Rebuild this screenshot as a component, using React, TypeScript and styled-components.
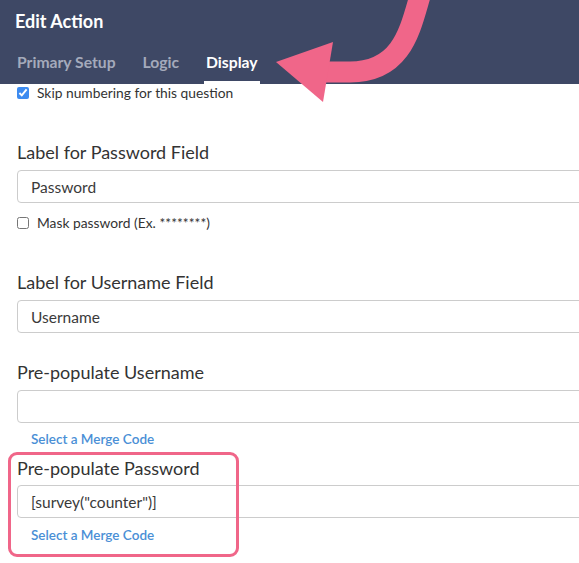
import React from "react";
import styled, { createGlobalStyle } from "styled-components";

const Global = createGlobalStyle`
  html, body { margin: 0; padding: 0; background: #ffffff; }
  body { font-family: Lato, "Open Sans", "Liberation Sans", sans-serif; overflow: hidden; }
  * { box-sizing: border-box; }
`;

const Page = styled.div`
  position: relative;
  width: 579px;
  height: 563px;
  overflow: hidden;
  background: #fff;
`;

const Header = styled.header`
  background: #3e4865;
  height: 84px;
  padding: 10px 0 0 15px;
  display: flex;
  flex-direction: column;
`;

const Title = styled.h1`
  margin: 0;
  font-size: 18px;
  line-height: 22px;
  font-weight: 700;
  color: #ffffff;
`;

const Tabs = styled.nav`
  margin-top: 21px;
  display: flex;
  gap: 23px;
`;

const Tab = styled.div<{ $active?: boolean }>`
  font-size: 15.7px;
  line-height: 18px;
  font-weight: 700;
  padding: 0 2px 10px;
  color: ${(p) => (p.$active ? "#ffffff" : "#a4aabb")};
  border-bottom: 3px solid ${(p) => (p.$active ? "#ffffff" : "transparent")};
`;

const Content = styled.main`
  padding-left: 17px;
  display: flex;
  flex-direction: column;
  align-items: flex-start;
`;

const CheckRow = styled.label<{ $mt?: number }>`
  display: flex;
  align-items: center;
  gap: 8px;
  height: 17px;
  margin-top: ${(p) => p.$mt ?? 0}px;
  font-size: 13.8px;
  color: #333;
`;

const Check = styled.input`
  margin: 0;
  width: 12px;
  height: 12px;
  accent-color: #3d8bf0;
`;

const Heading = styled.div<{ $mt: number }>`
  margin-top: ${(p) => p.$mt}px;
  font-size: 18px;
  line-height: 22px;
  color: #333;
`;

const Input = styled.div<{ $mt?: number }>`
  margin-top: ${(p) => p.$mt ?? 7}px;
  width: 620px;
  height: 33px;
  border: 1px solid #cccccc;
  border-radius: 4px;
  padding-left: 13px;
  display: flex;
  align-items: center;
  font-size: 15.5px;
  color: #3a3a3a;
`;

const MergeLink = styled.a<{ $mt: number }>`
  margin-top: ${(p) => p.$mt}px;
  margin-left: 14px;
  font-size: 13.5px;
  line-height: 17px;
  font-weight: 600;
  color: #4a8fd6;
  text-decoration: none;
`;

const Highlighted = styled.div`
  position: relative;
  display: flex;
  flex-direction: column;
  align-items: flex-start;
  margin-top: 9px;
`;

const HighlightBox = styled.div`
  position: absolute;
  left: -9px;
  top: -5px;
  width: 231px;
  height: 105px;
  border: 3px solid #f06689;
  border-radius: 9px;
  pointer-events: none;
`;

const ArrowOverlay = styled.svg`
  position: absolute;
  left: 0;
  top: 0;
  pointer-events: none;
`;

export default function App() {
  return (
    <Page>
      <Global />
      <Header>
        <Title>Edit Action</Title>
        <Tabs>
          <Tab>Primary Setup</Tab>
          <Tab>Logic</Tab>
          <Tab $active>Display</Tab>
        </Tabs>
      </Header>
      <Content>
        <CheckRow>
          <Check type="checkbox" defaultChecked />
          Skip numbering for this question
        </CheckRow>

        <Heading $mt={40}>Label for Password Field</Heading>
        <Input>Password</Input>
        <CheckRow $mt={11}>
          <Check type="checkbox" />
          Mask password (Ex. ********)
        </CheckRow>

        <Heading $mt={40}>Label for Username Field</Heading>
        <Input>Username</Input>

        <Heading $mt={28}>Pre-populate Username</Heading>
        <Input />
        <MergeLink $mt={8} href="#">Select a Merge Code</MergeLink>

        <Highlighted>
          <Heading $mt={0}>Pre-populate Password</Heading>
          <Input $mt={6}>[survey("counter")]</Input>
          <MergeLink $mt={9} href="#">Select a Merge Code</MergeLink>
          <HighlightBox />
        </Highlighted>
      </Content>

      <ArrowOverlay width="579" height="120" viewBox="0 0 579 120">
        <path
          d="M420 -4 C 410 30, 402 72, 350 72 L 326 72"
          fill="none"
          stroke="#f06689"
          strokeWidth="21"
        />
        <polygon points="276,62 333,42 323,102" fill="#f06689" />
      </ArrowOverlay>
    </Page>
  );
}
